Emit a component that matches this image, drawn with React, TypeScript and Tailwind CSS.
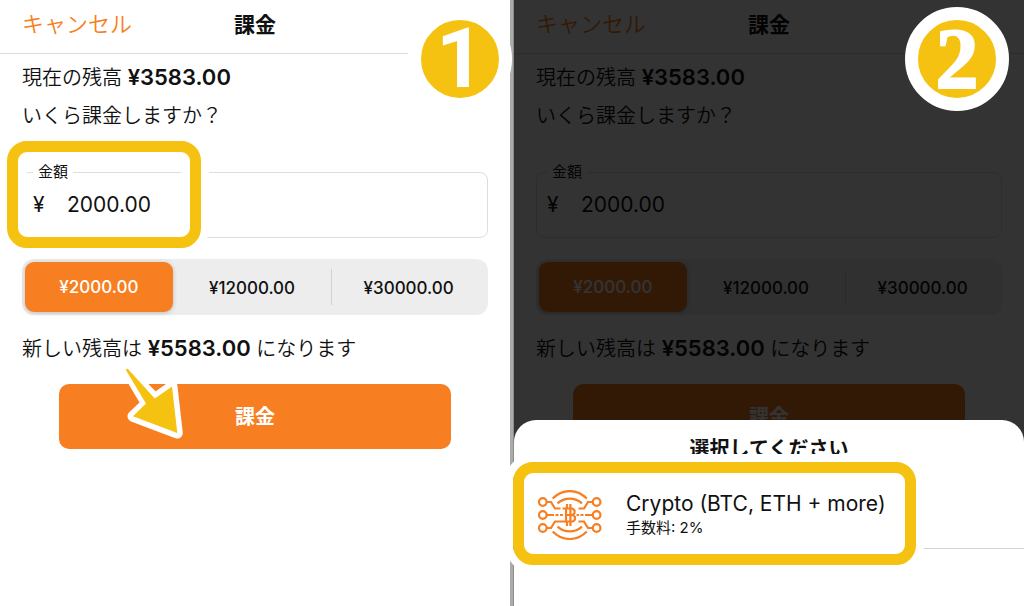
import { useId, useState } from "react";

const AMOUNTS = ["2000.00", "12000.00", "30000.00"];

function Highlight({ className }: { className: string }) {
  return (
    <div
      aria-hidden="true"
      className={`pointer-events-none absolute rounded-[20px] border-[11px] border-[#f6c211] shadow-[0_0_0_8px_#fff,inset_0_0_0_9px_#fff] ${className}`}
    />
  );
}

function StepBadge({ step, className }: { step: string; className: string }) {
  return (
    <div
      className={`absolute top-[7px] flex size-[104px] items-center justify-center rounded-full border-[13px] border-white bg-[#f6c211] leading-none text-white ${className}`}
    >
      {step}
    </div>
  );
}

function Arrow() {
  return (
    <svg
      aria-hidden="true"
      viewBox="120 362 70 82"
      className="pointer-events-none absolute -top-[22px] left-[61px] h-[82px] w-[70px]"
    >
      <path
        d="M126 369 L155 398.5 L172 386.5 L177.3 433 L133 416.3 L146.5 403.5 Z"
        fill="none"
        stroke="#fff"
        strokeWidth="11"
        strokeLinejoin="round"
      />
      <path d="M127.5 368.5 L154.8 398.5 L172 386.5 L177.3 433 L133 416.3 L146 403.5 L125.7 369.8 Z" fill="#f6c211" />
    </svg>
  );
}

function CryptoIcon() {
  return (
    <svg aria-hidden="true" viewBox="0 0 64 50" className="h-[50px] w-16 shrink-0" fill="none" stroke="#f77f22" strokeWidth="2.2">
      <circle cx="4.8" cy="12" r="3.8" />
      <circle cx="4.8" cy="25" r="3.8" />
      <circle cx="4.8" cy="38" r="3.8" />
      <circle cx="58.6" cy="12" r="3.8" />
      <circle cx="58.6" cy="25" r="3.8" />
      <circle cx="58.6" cy="38" r="3.8" />
      <path d="M8.6 12H13L17 18.5H22.5M24.5 18.5H28M8.6 38H13L17 31.5H28" />
      <path d="M54.8 12H50L46 18.5H40.5M54.8 38H50L46 31.5H40.5" />
      <path d="M8.6 25H16M17.5 25H20.5M22 25H25M54.8 25H47M45.5 25H42.5M41 25H38.5" />
      <path d="M14.7 8.6C24.5-1.5 39-1.5 48.8 8.6M19.6 13.4C26.5 7 37 7 44 13.4" />
      <path d="M14.7 41.4C24.5 51.5 39 51.5 48.8 41.4M19.6 36.6C26.5 43 37 43 44 36.6" />
      <path d="M27 18.5H34.5L36.5 20.5V23L34.7 25L37 27V29.5L35 31.5H27M28 18.5V31.5M29 14V18.5M32.4 14V36M29 31.5V36M28.6 25H34.7" />
    </svg>
  );
}

function TopUpForm({ guided = false }: { guided?: boolean }) {
  const id = useId();
  const [amount, setAmount] = useState(AMOUNTS[0]);
  return (
    <div>
      <header className="grid h-[54px] grid-cols-[1fr_auto_1fr] items-center border-b border-[#dcdcdc] px-[22px] pb-1">
        <button type="button" className="justify-self-start text-[22px] font-[350] text-[#f77f22]">
          キャンセル
        </button>
        <h1 className="text-[21px] font-bold">課金</h1>
      </header>
      <div className="px-[22px] pt-[5px] text-xl leading-[38px]">
        <p className="font-[350]">
          現在の残高 <strong className="text-[22px] leading-none font-semibold">¥3583.00</strong>
        </p>
        <p className="font-[350]">いくら課金しますか？</p>
        <div className="relative mt-[26px]">
          <fieldset className="h-[77px] rounded-lg border border-[#dedede] pl-[10px]">
            <legend className="px-[5px] text-[15px] leading-[22px]">
              <label htmlFor={id}>金額</label>
            </legend>
            <div className="flex h-11 items-center text-[21px]">
              <span className="w-[34px]">¥</span>
              <input
                id={id}
                type="text"
                inputMode="decimal"
                value={amount}
                onChange={(e) => setAmount(e.target.value)}
                className="min-w-0 flex-1 bg-transparent outline-none"
              />
            </div>
          </fieldset>
          {guided && <Highlight className="-top-5 -left-[15px] h-[107px] w-[194px]" />}
        </div>
        <div className="mt-[21px] grid h-14 grid-cols-[148fr_160fr_153fr] items-center rounded-xl bg-[#ededed] p-[3px] text-[17px] font-medium">
          {AMOUNTS.map((value, i) => (
            <button
              key={value}
              type="button"
              onClick={() => setAmount(value)}
              className={
                value === amount
                  ? "h-full rounded-[9px] bg-[#f77f22] text-white shadow-[0_1px_5px_#0003]"
                  : i === 1
                    ? "h-9 border-r border-[#d2d2d2]"
                    : "h-9"
              }
            >
              ¥{value}
            </button>
          ))}
        </div>
        <p className="mt-[15px] font-[350]">
          新しい残高は <strong className="text-[22px] leading-none font-semibold">¥5583.00</strong> になります
        </p>
        <div className="relative mx-[37px] mt-4">
          <button type="button" className="h-[65px] w-full rounded-[10px] bg-[#f77f22] font-bold text-white">
            課金
          </button>
          {guided && <Arrow />}
        </div>
      </div>
    </div>
  );
}

export default function App() {
  return (
    <main className="flex min-h-screen bg-white font-['Inter','Noto_Sans_CJK_JP',sans-serif] text-[#111]">
      <section className="relative z-10 min-w-0 flex-1">
        <TopUpForm guided />
        <StepBadge step="1" className="-right-[2px] font-['Roboto',sans-serif] text-[84px] font-bold" />
      </section>
      <div className="w-1 border-r border-[#8c8c8c] bg-[#ababab]" />
      <section className="relative min-w-0 flex-1">
        <TopUpForm />
        <div className="absolute inset-0 bg-black/80" />
        <StepBadge
          step="2"
          className="right-[15px] font-['Liberation_Serif',serif] text-[86px] font-bold [-webkit-text-stroke:2px_white]"
        />
        <div role="dialog" aria-label="選択してください" className="absolute inset-x-0 bottom-0 rounded-t-[22px] bg-white pt-[15px] pb-[57px]">
          <h2 className="text-center text-xl leading-[29px] font-bold">選択してください</h2>
          <div className="relative border-b border-[#d4d4d4]">
            <button type="button" className="flex h-[84px] w-full items-center gap-6 pt-[18px] pl-6 text-left">
              <CryptoIcon />
              <span className="flex flex-col">
                <span className="text-[21px] leading-[26px]">Crypto (BTC, ETH + more)</span>
                <span className="text-[15px] leading-[22px]">手数料: 2%</span>
              </span>
            </button>
            <Highlight className="-top-[2px] -left-px h-[103px] w-[403px]" />
          </div>
        </div>
      </section>
    </main>
  );
}
